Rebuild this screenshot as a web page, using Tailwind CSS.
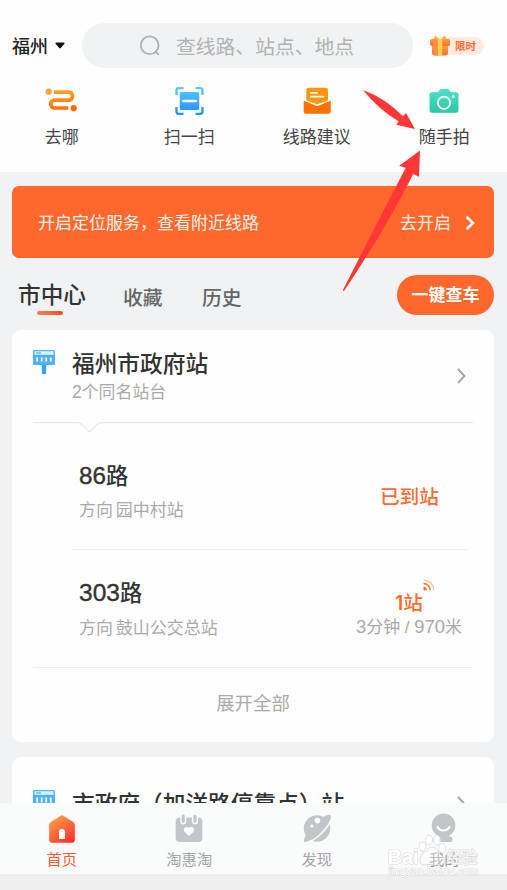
<!DOCTYPE html>
<html lang="zh-CN">
<head>
<meta charset="utf-8">
<meta name="viewport" content="width=device-width, initial-scale=1">
<title>福州公交</title>
<script src="https://cdn.jsdelivr.net/npm/@tailwindcss/browser@4"></script>
</head>
<body class="w-[507px] h-[890px] overflow-hidden bg-[#f0f2f4] font-['Liberation_Sans','Noto_Sans_CJK_SC',sans-serif] text-[#333] leading-none whitespace-nowrap">
<div class="relative w-[507px] h-[890px] overflow-hidden flex flex-col">

  <header class="h-[172px] shrink-0 bg-[#fefefe] pt-[23px]">
    <div class="flex items-center h-[45px] pl-3">
      <div class="w-[70px] flex items-center gap-[7px]">
        <span class="pt-[2px] text-[18px] leading-6 font-medium text-[#222]">福州</span>
        <svg class="w-[10px] h-[7px]" viewBox="0 0 10 7"><path d="M1 .5H9Q10 .8 9.4 1.7L5.8 6Q5 6.8 4.2 6L.6 1.7Q0 .8 1 .5Z" fill="#111"/></svg>
      </div>
      <div class="w-[331px] h-[45px] rounded-full bg-[#f0f2f4] flex items-center pl-[57px]">
        <svg class="w-[22px] h-[22px] mr-[15px]" viewBox="0 0 22 22" fill="none" stroke="#aeb0b1" stroke-width="1.8" stroke-linecap="round"><circle cx="10.7" cy="10.3" r="8.9"/><path d="M16.5 16.5L19.3 19.3"/></svg>
        <span class="pt-[2px] text-[19.8px] leading-6 text-[#b3b3b3]">查线路、站点、地点</span>
      </div>
      <div class="ml-[17px] flex items-center">
        <svg class="w-[20px] h-[21px] z-10" viewBox="0 0 20 21">
          <defs><linearGradient id="gift" x2="0" y2="1"><stop stop-color="#ff9d45"/><stop offset="1" stop-color="#ff6d2e"/></linearGradient></defs>
          <path d="M9.8 4L5 .5L3.3 4.5H16.7L15 .5L10.4 4Z" fill="#ffb72f"/>
          <rect x="0" y="4" width="20" height="7" rx="1.8" fill="url(#gift)"/>
          <path d="M2 11H18V17.5Q18 20.5 15 20.5H5Q2 20.5 2 17.5Z" fill="url(#gift)"/>
          <path d="M3.5 4H7.2V20.5H4.5L3.5 11Z" fill="#ff8f45"/>
          <path d="M7.8 4H12.2V20.5H7.8Z" fill="#ffd34e"/>
        </svg>
        <span class="-ml-[9px] w-[43px] h-[18px] rounded-r-full bg-[#ffebe0] pl-[14px] text-[10.5px] leading-[19px] font-bold text-[#ff6c35]">限时</span>
      </div>
    </div>

    <div class="grid grid-cols-4 w-[510px] -ml-[2px] mt-[16px] text-[17px] leading-6 text-[#444]">
      <div class="flex flex-col items-center gap-[8px]">
        <svg class="w-[34px] h-[34px]" viewBox="0 0 34 34">
          <defs><linearGradient id="route" gradientUnits="userSpaceOnUse" x1="0" y1="5" x2="0" y2="29"><stop stop-color="#ffa52e"/><stop offset="1" stop-color="#ff6500"/></linearGradient></defs>
          <circle cx="3.7" cy="7.7" r="3.1" fill="#ffa23a"/><circle cx="28.7" cy="24.2" r="3.1" fill="#ff660e"/>
          <path d="M9 8.1H24.4A4.2 4.2 0 0 1 24.4 16.2H9.6A3.9 3.9 0 0 0 9.6 24H23.2" fill="none" stroke="url(#route)" stroke-width="3.7"/>
        </svg><span>去哪</span>
      </div>
      <div class="flex flex-col items-center gap-[8px]">
        <svg class="w-[34px] h-[34px]" viewBox="0 0 34 34">
          <defs><linearGradient id="scan" gradientUnits="userSpaceOnUse" x1="0" y1="3" x2="0" y2="31"><stop stop-color="#55ccff"/><stop offset="1" stop-color="#258bfd"/></linearGradient></defs>
          <rect x="7.8" y="8" width="19.4" height="18" rx="1.6" fill="url(#scan)"/>
          <path d="M11 17H24" stroke="#fff" stroke-width="2.3" stroke-linecap="round"/>
          <path d="M4.5 11V6.5Q4.5 4.2 6.8 4.2H11.5M23.5 4.2H28.2Q30.5 4.2 30.5 6.5V11M30.5 23V27.5Q30.5 29.8 28.2 29.8H23.5M11.5 29.8H6.8Q4.5 29.8 4.5 27.5V23" fill="none" stroke="url(#scan)" stroke-width="2.3"/>
        </svg><span>扫一扫</span>
      </div>
      <div class="flex flex-col items-center gap-[8px]">
        <svg class="w-[34px] h-[34px]" viewBox="0 0 34 34">
          <path d="M6.3 16.5V6.5Q6.3 3.8 9 3.8H25.3Q28 3.8 28 6.5V16.5L17.2 20.3Z" fill="#ff950c"/>
          <path d="M10.8 8.9H17M10.8 12.6H23.5" stroke="#fff" stroke-width="1.7" stroke-linecap="round"/>
          <path d="M3.7 17.4Q3.7 16 5 16.7L16.5 21.8Q17.2 22.1 18 21.8L29.5 16.7Q30.8 16 30.8 17.4V27.5Q30.8 29.8 28.5 29.8H6Q3.7 29.8 3.7 27.5Z" fill="#ff7200"/>
          <path d="M3.7 16L16.5 21.3Q17.2 21.6 18 21.3L30.8 16" fill="none" stroke="#fff" stroke-width="1.1"/>
        </svg><span>线路建议</span>
      </div>
      <div class="flex flex-col items-center gap-[8px]">
        <svg class="w-[34px] h-[34px]" viewBox="0 0 34 34">
          <defs><linearGradient id="cam" x2="0" y2="1"><stop stop-color="#4be0c4"/><stop offset="1" stop-color="#2fc7a8"/></linearGradient></defs>
          <path d="M5 8.2H10.2Q11.2 8.2 11.8 7.2L12.7 5.9Q13.2 5.1 14.2 5.1H20.8Q21.8 5.1 22.3 5.9L23.2 7.2Q23.8 8.2 24.8 8.2H29Q31.5 8.2 31.5 10.7V26.3Q31.5 28.8 29 28.8H5Q2.5 28.8 2.5 26.3V10.7Q2.5 8.2 5 8.2Z" fill="url(#cam)"/>
          <circle cx="17" cy="18.7" r="6.1" fill="none" stroke="#fff" stroke-width="1.8"/><circle cx="26.2" cy="12.4" r="1.5" fill="#fff"/>
        </svg><span>随手拍</span>
      </div>
    </div>
  </header>

  <main class="h-[631px] shrink-0 overflow-hidden pt-[14px] pl-3 pr-[13px]">
    <section class="h-[72px] rounded-[7px] bg-[#ff682c] flex items-center pl-[26px] pr-[19px] text-[17px] leading-6 text-[#fff0e8]">
      <span class="pt-[4px]">开启定位服务，查看附近线路</span>
      <span class="ml-auto pt-[4px]">去开启</span>
      <svg class="ml-[14px] mt-[2px] w-[10px] h-[16px]" viewBox="0 0 10 16" fill="none" stroke="#fff" stroke-width="2.6"><path d="M1.5 1.7L8 8L1.5 14.3"/></svg>
    </section>

    <nav class="mt-[17px] h-[40px] flex items-start pl-[6px]">
      <div class="w-[68px] mr-[37px] flex flex-col items-center pt-[7px]">
        <span class="text-[22.6px] leading-[28px] font-medium">市中心</span>
        <span class="mt-[1px] mr-[4px] w-[26px] h-[4px] rounded-full bg-linear-to-r from-[#ff8055] to-[#ff4b10]"></span>
      </div>
      <span class="text-[19.8px] leading-[28px] font-medium text-[#666] w-[79px] pt-[9px]">收藏</span>
      <span class="text-[19.8px] leading-[28px] font-medium text-[#666] pt-[9px]">历史</span>
      <button class="ml-auto w-[97px] h-[40px] rounded-full bg-[#ff682c] text-white text-[17px] leading-[41px] font-bold">一键查车</button>
    </nav>

    <section class="mt-[15px] h-[412px] rounded-[9px] bg-[#fefefe] pl-[21px] pr-[21px]">
      <div class="flex h-[92px] pt-[19px]">
        <svg class="w-[22px] h-[25px] mr-[17px] mt-[1px]" viewBox="0 0 22 25">
          <path d="M8.8 13H13.2V22.8Q13.2 24.3 11 24.3T8.8 22.8Z" fill="#3d9fff"/>
          <rect x="0" y="0" width="22" height="15" rx="1.6" fill="#4cb2ff"/>
          <path d="M1.4 1.2H20.6V4.8H1.4Z" fill="#d9f2ff"/><path d="M3 3H8" stroke="#4cb2ff" stroke-width="1.2"/>
          <path d="M4.2 7.5V11.5M8.7 7.5V11.5M13.2 7.5V11.5M17.8 7.5V11.5" stroke="#fff" stroke-width="1.8"/>
        </svg>
        <div class="flex flex-col pt-[2px]">
          <h2 class="text-[22.7px] leading-[27px] font-medium">福州市政府站</h2>
          <p class="mt-[2px] text-[16.9px] leading-[24px] text-[#aaa]"><span class="text-[17.5px]">2</span>个同名站台</p>
        </div>
        <svg class="ml-auto mr-[7px] mt-[19px] w-[9px] h-[16px]" viewBox="0 0 9 16" fill="none" stroke="#a5a5a5" stroke-width="1.9"><path d="M1 1L7.5 8L1 15"/></svg>
      </div>
      <svg class="block w-[440px] h-[12px]" viewBox="0 0 440 12" fill="none" stroke="#e7e8e9" stroke-width="1.1"><path d="M0 .6H45Q47 .6 49 2.5L56.6 10L64 2.5Q66 .6 68 .6H440"/></svg>

      <div class="ml-[39px] mr-[4px] h-[116px] border-b border-[#ededed] flex pl-[7px]">
        <div class="pt-[28px]">
          <h3 class="text-[22.3px] leading-[28px] font-medium"><span class="text-[24.2px] [-webkit-text-stroke:0.35px_#333]">86</span>路</h3>
          <p class="mt-[8px] text-[17px] leading-[24px] text-[#aaa] [word-spacing:-2px]">方向 园中村站</p>
        </div>
        <strong class="ml-auto mr-[30px] mt-[49px] text-[19.7px] leading-[28px] font-medium text-[#ff6b30]">已到站</strong>
      </div>

      <div class="ml-[39px] h-[117px] flex pl-[7px]">
        <div class="pt-[29px]">
          <h3 class="text-[22.3px] leading-[28px] font-medium"><span class="text-[24.5px] [-webkit-text-stroke:0.35px_#333]">303</span>路</h3>
          <p class="mt-[9px] text-[17px] leading-[24px] text-[#aaa] [word-spacing:-2px]">方向 鼓山公交总站</p>
        </div>
        <div class="ml-auto mr-[11px] pt-[28px] flex flex-col items-end">
          <div class="flex items-start mr-[27px]">
            <strong class="mt-[11px] text-[19.7px] leading-[28px] font-medium text-[#ff6b30]"><span class="font-['Inter'] font-semibold">1</span>站</strong>
            <svg class="mt-[1px] w-[12px] h-[12px]" viewBox="0 0 12 12" fill="none" stroke-width="1.7"><path d="M.5 7.5A4 4 0 0 1 4 11.3H.5Z" fill="#ff6b30"/><path d="M.5 4.4A7 7 0 0 1 7.2 11.3" stroke="#ff7b48"/><path d="M.5 1.1A10.3 10.3 0 0 1 10.8 11.3" stroke="#ffc2a7" stroke-width="1.3"/></svg>
          </div>
          <span class="text-[17px] leading-[24px] -mt-[2px] text-[#aaa]"><span class="text-[18.4px]">3</span>分钟 / <span class="text-[18.4px]">970</span>米</span>
        </div>
      </div>
      <div class="border-t border-[#ededed] h-[74px] text-center text-[18.4px] leading-[72px] text-[#aaa]">展开全部</div>
    </section>

    <section class="mt-[15px] h-[46px] rounded-t-[9px] bg-[#fefefe] pl-[21px] pr-[21px] flex items-start pt-[32px]">
      <svg class="w-[22px] h-[25px] mr-[17px] mt-[1px] shrink-0" viewBox="0 0 22 25">
        <rect x="0" y="0" width="22" height="15" rx="1.6" fill="#4cb2ff"/>
        <path d="M1.4 1.2H20.6V4.8H1.4Z" fill="#d9f2ff"/><path d="M3 3H8" stroke="#4cb2ff" stroke-width="1.2"/>
        <path d="M4.2 7.5V12.5M8.7 7.5V12.5M13.2 7.5V12.5M17.8 7.5V12.5" stroke="#fff" stroke-width="1.8"/>
      </svg>
      <h2 class="pt-[2px] text-[22.7px] leading-[27px] font-medium">市政府（加洋路停靠点）站</h2>
      <svg class="ml-auto mr-[7px] mt-[7px] w-[9px] h-[16px]" viewBox="0 0 9 16" fill="none" stroke="#a5a5a5" stroke-width="1.9"><path d="M1 1L7.5 8L1 15"/></svg>
    </section>
  </main>

  <footer class="h-[71px] shrink-0 bg-[#fafbfb] overflow-hidden">
    <div class="grid grid-cols-4 w-[510px] -ml-[2px] pt-[9px] text-[15.3px] leading-[22px] text-[#a4a6a7]">
      <div class="flex flex-col items-center gap-[3px] text-[#ff5b2d]">
        <svg class="w-[36px] h-[34px] overflow-visible" viewBox="0 0 36 34">
          <defs><linearGradient id="home" x1=".2" y1="0" x2=".8" y2="1"><stop stop-color="#ffa24a"/><stop offset="1" stop-color="#ff302c"/></linearGradient></defs>
          <path class="blur-[2px]" d="M7 12H30V29H7Z" fill="#ff8060" opacity=".4"/>
          <path d="M16.7 3.7Q18 2.8 19.3 3.7L29.2 10Q30.8 11 30.8 13V27.5Q30.8 30.7 27.6 30.7H8.4Q5.2 30.7 5.2 27.5V13Q5.2 11 6.8 10Z" fill="url(#home)"/>
          <path d="M15 27V20Q15 17 18 17T21 20V27Z" fill="#fff"/>
        </svg><span>首页</span>
      </div>
      <div class="flex flex-col items-center gap-[3px]">
        <svg class="w-[36px] h-[34px]" viewBox="0 0 36 34">
          <rect x="4.7" y="5.5" width="26.6" height="24.5" rx="4" fill="#c1c6c8"/>
          <path d="M12.2 3.8V9.5M24 3.8V9.5" stroke="#fafbfb" stroke-width="6" stroke-linecap="round"/><path d="M12.2 4.2V9.3M24 4.2V9.3" stroke="#c1c6c8" stroke-width="3.2" stroke-linecap="round"/>
          <path d="M18 24L13.7 20Q11.8 17.8 14 15.6Q16.3 14 18 16.3Q19.7 14 22 15.6Q24.2 17.8 22.3 20Z" fill="#fff"/>
        </svg><span>淘惠淘</span>
      </div>
      <div class="flex flex-col items-center gap-[3px]">
        <svg class="w-[36px] h-[34px]" viewBox="0 0 36 34">
          <circle cx="18" cy="16.5" r="13.2" fill="#c1c6c8"/>
          <path d="M24 5Q30.5 1.5 31.8 3.2Q33 7.5 25 16.5Q15.5 27 7.8 29.8Q4.5 30.8 4.8 28.5Q5 26.5 7 23Z" fill="#c1c6c8"/>
          <path d="M30.8 11Q26 18.5 19.5 24Q15 27.8 10.5 29.7" fill="none" stroke="#fafbfb" stroke-width="1.6"/>
          <circle cx="18.4" cy="8.6" r="2.8" fill="#fff"/><circle cx="12.8" cy="14" r="1.6" fill="#fff"/>
        </svg><span>发现</span>
      </div>
      <div class="flex flex-col items-center gap-[3px]">
        <svg class="w-[36px] h-[34px]" viewBox="0 0 36 34">
          <circle cx="17.5" cy="13.3" r="11.8" fill="#c1c6c8"/><path d="M13.5 23H22.5V24.5H24Q26.5 24.5 26.5 27.3T24 30H12.5V27Q14 26 13.5 23Z" fill="#c1c6c8"/>
          <path d="M11.5 15Q13.5 18.5 17.5 18.5T23.5 15" fill="none" stroke="#fff" stroke-width="2.2" stroke-linecap="round"/>
        </svg><span class="text-[#8f9192]">我的</span>
      </div>
    </div>
  </footer>
  <div class="h-[16px] shrink-0 bg-[#efefef]"></div>

  <svg class="absolute inset-0 w-[507px] h-[890px] pointer-events-none" viewBox="0 0 507 890">
    <g fill="#ff3737">
      <path d="M363 90Q385 98 403 116.3L406 113L415 129L396.3 124.7L398.6 121.3Q378 109 363 90Z"/>
      <path d="M420 150.5L419 176.8L413.3 174Q386 228 344.4 290.6Q342.5 291.5 343.2 289.5Q378 221 405.7 168L399.2 165.7Z"/>
    </g>
    <g fill="#fff" fill-opacity=".7" stroke="#d0d1d1" stroke-opacity=".8" stroke-width="1.2" paint-order="stroke">
      <text x="387.5" y="863.5" font-family="Liberation Sans, sans-serif" font-size="20.5" font-weight="700" fill-opacity="1" textLength="31" lengthAdjust="spacingAndGlyphs">Bai</text>
      <ellipse cx="422.5" cy="846.5" rx="3.2" ry="4.3"/><ellipse cx="429" cy="840" rx="3.3" ry="4.6"/><ellipse cx="437" cy="840.2" rx="3.3" ry="4.6"/><ellipse cx="442.3" cy="848.2" rx="3.2" ry="4.6"/>
      <path d="M432 847Q435 847 437.5 851T443.5 857.5Q445.5 863.5 440.5 865Q436 865 432 864.5T423.5 865Q418.5 863.5 420.5 857.5T427 851Q429 847 432 847Z" fill-opacity=".4"/>
      <text x="446.5" y="862.5" font-family="Noto Sans CJK SC, sans-serif" font-size="15.5" font-weight="500" fill-opacity=".85">经验</text>
      <text x="388.5" y="875" font-family="Liberation Sans, sans-serif" font-size="10" stroke-width="1" fill-opacity="1" textLength="90" lengthAdjust="spacingAndGlyphs">jingyan.baidu.com</text>
    </g>
  </svg>
</div>
</body>
</html>
